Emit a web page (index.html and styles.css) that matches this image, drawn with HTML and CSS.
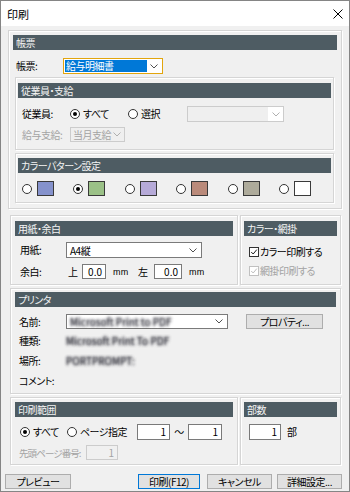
FILE: index.html
```html
<!DOCTYPE html>
<html lang="ja">
<head>
<meta charset="utf-8">
<title>印刷</title>
<link rel="stylesheet" href="styles.css">
</head>
<body>
<div class="win">
  <div class="title">
    <span class="ttl">印刷</span>
    <svg class="close" width="10" height="10" viewBox="0 0 10 10"><path d="M0.5 0.5L9.5 9.5M9.5 0.5L0.5 9.5" stroke="#000" stroke-width="1" fill="none"/></svg>
  </div>
  <div class="body">
    <section class="grp g-form">
      <div class="hdr">帳票</div>
      <div class="row r-form">
        <span class="lbl l-form">帳票:</span>
        <div class="combo focus c-form">
          <span class="sel">給与明細書</span>
          <svg class="chev" width="8" height="5" viewBox="0 0 8 5"><path d="M0.5 0.5L4 4L7.5 0.5" stroke="#505050" fill="none"/></svg>
        </div>
      </div>
      <section class="sub s-emp">
        <div class="hdr">従業員・支給</div>
        <div class="row r-emp">
          <span class="lbl l-sub">従業員:</span>
          <span class="opt o-all"><span class="radio on"></span>すべて</span>
          <span class="opt o-sel"><span class="radio"></span>選択</span>
          <div class="combo dis c-emp">
            <span></span>
            <span class="abox"><svg class="chev" width="8" height="5" viewBox="0 0 8 5"><path d="M0.5 0.5L4 4L7.5 0.5" stroke="#b0b0b0" fill="none"/></svg></span>
          </div>
        </div>
        <div class="row r-pay dim">
          <span class="lbl l-sub">給与支給:</span>
          <div class="combo dis c-pay">
            <span class="val">当月支給</span>
            <svg class="chev" width="8" height="5" viewBox="0 0 8 5"><path d="M0.5 0.5L4 4L7.5 0.5" stroke="#b0b0b0" fill="none"/></svg>
          </div>
        </div>
      </section>
      <section class="sub s-color">
        <div class="hdr">カラーパターン設定</div>
        <div class="swatches">
          <span class="sw"><span class="radio"></span><span class="chip c1"></span></span>
          <span class="sw"><span class="radio on"></span><span class="chip c2"></span></span>
          <span class="sw"><span class="radio"></span><span class="chip c3"></span></span>
          <span class="sw"><span class="radio"></span><span class="chip c4"></span></span>
          <span class="sw"><span class="radio"></span><span class="chip c5"></span></span>
          <span class="sw"><span class="radio"></span><span class="chip c6"></span></span>
        </div>
      </section>
    </section>

    <div class="pair p1">
      <section class="grp g-left g-paper">
        <div class="hdr">用紙・余白</div>
        <div class="row r-paper">
          <span class="lbl l-paper">用紙:</span>
          <div class="combo c-paper">
            <span class="val">A4縦</span>
            <svg class="chev" width="8" height="5" viewBox="0 0 8 5"><path d="M0.5 0.5L4 4L7.5 0.5" stroke="#505050" fill="none"/></svg>
          </div>
        </div>
        <div class="row r-margin">
          <span class="lbl l-paper">余白:</span>
          <span class="side s-top">上</span>
          <span class="inp i-top">0.0</span>
          <span class="unit">mm</span>
          <span class="side s-left">左</span>
          <span class="inp i-left">0.0</span>
          <span class="unit">mm</span>
        </div>
      </section>
      <section class="grp g-right g-cp">
        <div class="hdr">カラー・網掛</div>
        <div class="chk-row ck1">
          <span class="check"><svg width="10" height="10" viewBox="0 0 10 10"><path d="M1.5 5L4 7.5L8.5 2" stroke="#000" stroke-width="1.1" fill="none"/></svg></span>
          <span>カラー印刷する</span>
        </div>
        <div class="chk-row ck2 dim">
          <span class="check dis"><svg width="10" height="10" viewBox="0 0 10 10"><path d="M1.5 5L4 7.5L8.5 2" stroke="#b5b5b5" stroke-width="1.1" fill="none"/></svg></span>
          <span>網掛印刷する</span>
        </div>
      </section>
    </div>

    <section class="grp g-printer">
      <div class="hdr">プリンタ</div>
      <div class="row r-name">
        <span class="lbl l-name">名前:</span>
        <div class="combo c-name">
          <span class="val blur">Microsoft Print to PDF</span>
          <svg class="chev" width="8" height="5" viewBox="0 0 8 5"><path d="M0.5 0.5L4 4L7.5 0.5" stroke="#505050" fill="none"/></svg>
        </div>
        <span class="btn b-prop">プロパティ...</span>
      </div>
      <div class="info">
        <span class="lbl l-name">種類:</span><span class="blur">Microsoft Print To PDF</span>
      </div>
      <div class="info">
        <span class="lbl l-name">場所:</span><span class="blur">PORTPROMPT:</span>
      </div>
      <div class="info">
        <span class="lbl l-name">コメント:</span><span></span>
      </div>
    </section>

    <div class="pair p2">
      <section class="grp g-left g-range">
        <div class="hdr">印刷範囲</div>
        <div class="row r-range">
          <span class="opt o-all2"><span class="radio on"></span>すべて</span>
          <span class="opt o-page"><span class="radio"></span>ページ指定</span>
          <span class="inp i-from">1</span>
          <span class="tilde">～</span>
          <span class="inp i-to">1</span>
        </div>
        <div class="row r-start dim">
          <span class="lbl l-start">先頭ページ番号:</span>
          <span class="inp dis i-start">1</span>
        </div>
      </section>
      <section class="grp g-right g-copies">
        <div class="hdr">部数</div>
        <div class="row r-copies">
          <span class="inp i-copies">1</span>
          <span class="unit-bu">部</span>
        </div>
      </section>
    </div>

    <div class="buttons">
      <span class="btn b-prev">プレビュー</span>
      <span class="btn def b-print">印刷(F12)</span>
      <span class="btn b-cancel">キャンセル</span>
      <span class="btn b-detail">詳細設定...</span>
    </div>
  </div>
</div>
</body>
</html>
```

FILE: styles.css
```css
* { box-sizing: border-box; margin: 0; padding: 0; }
html, body { margin: 0; background: #fff; }
body {
  font-family: "Noto Sans CJK JP", "Noto Sans", sans-serif;
  font-size: 10px;
  font-weight: 400;
  font-feature-settings: "palt";
  letter-spacing: -0.5px;
  color: #000;
}
.win {
  width: 350px;
  height: 492px;
  border: 1px solid #858585;
  display: flex;
  flex-direction: column;
}
.title {
  height: 25px;
  background: #fff;
  display: flex;
  align-items: center;
  justify-content: space-between;
  padding: 0 6px 0 6px;
}
.ttl { font-size: 11px; line-height: 14px; letter-spacing: 0; }
.close { display: block; }
.body {
  flex: 1;
  background: #f0f0f0;
  padding-top: 4px;
}
.grp, .sub {
  border: 1px solid #d5d5d5;
  box-shadow: inset 1px 1px 0 #fff, 1px 1px 0 #fff;
}
.hdr {
  height: 15px;
  line-height: 15px;
  background: #4e5c63;
  color: #f4f4f4;
  padding-left: 3px;
  font-size: 10px;
}
.row { display: flex; align-items: center; }
.lbl { line-height: 14px; white-space: nowrap; }
.dim { color: #a3a3a3; }
.opt { display: flex; align-items: center; line-height: 14px; white-space: nowrap; }
.radio {
  width: 10px;
  height: 10px;
  border: 1px solid #333;
  border-radius: 50%;
  background: #fff;
  margin-right: 3px;
  display: flex;
  align-items: center;
  justify-content: center;
  flex: none;
}
.radio.on::after {
  content: "";
  width: 4px;
  height: 4px;
  border-radius: 50%;
  background: #000;
}
.combo {
  display: flex;
  align-items: center;
  justify-content: space-between;
  border: 1px solid #7a7a7a;
  background: #fff;
  padding-right: 4px;
  line-height: 13px;
}
.combo .val { padding-left: 3px; white-space: nowrap; }
.combo.focus { border-color: #e2a50d; }
.combo.dis { border-color: #cccccc; background: #efefef; }
.chev { display: block; flex: none; }
.sel {
  margin-left: 1px;
  width: 82px;
  height: 12px;
  line-height: 12px;
  background: #0078d7;
  color: #fff;
  padding-left: 1px;
}
.abox {
  width: 15px;
  height: 14px;
  background: #fff;
  display: flex;
  align-items: center;
  justify-content: center;
  margin-right: -4px;
}
.inp {
  display: block;
  border: 1px solid #7a7a7a;
  background: #fff;
  text-align: right;
  padding-right: 3px;
  line-height: 13px;
  letter-spacing: 0;
}
.inp.dis { border-color: #cccccc; background: #f0f0f0; color: #a3a3a3; }
.btn {
  display: flex;
  align-items: center;
  justify-content: center;
  height: 15px;
  background: #e1e1e1;
  border: 1px solid #adadad;
  line-height: 13px;
  white-space: nowrap;
}
.btn.def { border-color: #0078d7; }
.blur {
  display: inline-block;
  color: transparent;
  text-shadow: 0 0 3px rgba(30, 30, 40, 0.95), 0 0 3px rgba(60, 60, 70, 0.7);
  white-space: nowrap;
  letter-spacing: 0;
}

/* 帳票 */
.g-form { margin-left: 7px; width: 334px; padding: 4px 4px 5px; }
.r-form { margin-top: 8px; height: 16px; }
.l-form { width: 50px; padding-left: 3px; }
.c-form { width: 100px; height: 16px; }

.s-emp { margin: 3px 3px 0 2px; padding: 5px 2px 7px; }
.r-emp { margin-top: 8px; height: 16px; }
.l-sub { width: 52px; padding-left: 4px; }
.o-all { width: 58px; }
.o-sel { width: 59px; }
.c-emp { width: 97px; height: 16px; }
.r-pay { margin-top: 5px; height: 15px; }
.c-pay { width: 55px; height: 15px; color: #a3a3a3; padding-right: 3px; }
.c-pay .val { padding-left: 2px; }

.s-color { margin: 3px 3px 0 2px; padding: 4px 2px 6px; }
.swatches {
  margin-top: 8px;
  height: 15px;
  padding-left: 4px;
  display: grid;
  grid-template-columns: repeat(6, 51.4px);
}
.sw { display: flex; align-items: center; }
.sw .radio { margin-right: 5px; }
.chip { width: 17px; height: 15px; border: 1px solid #3a3a3a; }
.c1 { background: #8592cc; }
.c2 { background: #9bc187; }
.c3 { background: #b6aad8; }
.c4 { background: #ba8a7a; }
.c5 { background: #aeab9b; }
.c6 { background: #ffffff; }

/* pairs */
.pair { display: flex; align-items: stretch; }
.p1 { margin-top: 6px; }
.p2 { margin-top: 3px; }
.g-left { margin-left: 9px; width: 228px; }
.g-right { margin-left: 2px; width: 101px; }

.g-paper { padding: 5px 4px 5px; }
.r-paper { margin-top: 6px; height: 16px; }
.l-paper { width: 51px; padding-left: 5px; }
.c-paper { width: 136px; height: 16px; }
.r-margin { margin-top: 6px; height: 15px; }
.side { margin-left: 2px; width: 14px; line-height: 14px; }
.s-left { margin-left: 11px; width: 16px; }
.i-top { width: 24px; height: 15px; }
.i-left { width: 28px; height: 15px; }
.unit { margin-left: 7px; width: 14px; font-family: "Liberation Sans", sans-serif; font-size: 9px; letter-spacing: 0.3px; }

.g-cp { padding: 5px 3px; }
.chk-row { display: flex; align-items: center; height: 10px; padding-left: 5px; line-height: 12px; white-space: nowrap; }
.ck1 { margin-top: 11px; }
.ck2 { margin-top: 9px; }
.check {
  width: 10px;
  height: 10px;
  border: 1px solid #333;
  background: #fff;
  margin-right: 1px;
  display: flex;
  align-items: center;
  justify-content: center;
  flex: none;
}
.check svg { display: block; }
.check.dis { border-color: #c0c0c0; }

/* プリンタ */
.g-printer { margin: 3px 0 0 9px; width: 331px; padding: 3px 4px 2px; }
.r-name { margin-top: 7px; height: 15px; }
.l-name { width: 51px; padding-left: 4px; }
.c-name { width: 162px; height: 15px; }
.b-prop { margin-left: 18px; width: 77px; height: 15px; }
.info { display: flex; align-items: center; height: 20px; line-height: 14px; }
.r-name + .info { margin-top: 2px; }

/* 印刷範囲 */
.g-range { padding: 4px 4px 4px; }
.r-range { margin-top: 7px; height: 16px; }
.o-all2 { width: 52px; padding-left: 5px; }
.o-page { width: 70px; }
.i-from { width: 33px; height: 16px; }
.i-to { width: 34px; height: 16px; }
.tilde { width: 18px; text-align: center; line-height: 14px; }
.r-start { margin-top: 5px; height: 15px; }
.l-start { width: 71px; padding-left: 4px; font-size: 9.5px; letter-spacing: -0.9px; }
.i-start { width: 32px; height: 15px; }

.g-copies { padding: 4px 3px; }
.r-copies { margin-top: 7px; height: 16px; padding-left: 5px; }
.i-copies { width: 32px; height: 16px; }
.unit-bu { margin-left: 6px; line-height: 14px; }

/* buttons */
.buttons { display: flex; margin-top: 9px; padding-left: 4px; height: 15px; }
.b-prev { width: 66px; }
.b-print { margin-left: 67px; width: 62px; }
.b-cancel { margin-left: 7px; width: 65px; }
.b-detail { margin-left: 5px; width: 65px; }
```
